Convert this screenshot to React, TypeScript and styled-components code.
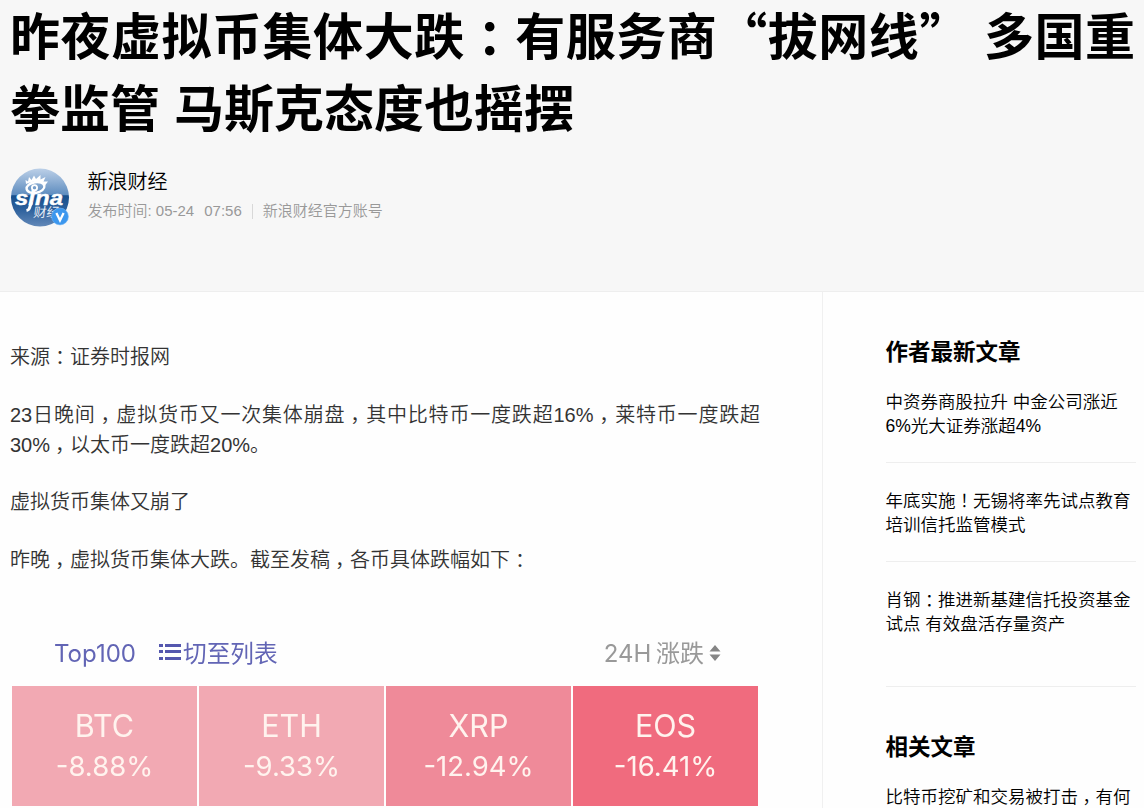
import React from "react"
import styled, { createGlobalStyle } from "styled-components"

const GlobalStyle = createGlobalStyle`
  * {
    box-sizing: border-box;
  }
  body {
    margin: 0;
    background: #fefefe;
    overflow: hidden;
    font-family: "Liberation Sans", "Noto Sans CJK SC", sans-serif;
    font-weight: 350;
  }
  h1, h2, p, ul {
    margin: 0;
    padding: 0;
    font-weight: inherit;
  }
`

// 🧱 Layout
const Page = styled.div`
  width: 1144px;
  height: 808px;
  display: flex;
  flex-direction: column;
  overflow: hidden;
`

const Header = styled.header`
  flex: none;
  height: 292px;
  background: #f7f7f7;
  border-bottom: 1px solid #eee;
  padding: 0 9px 0 10px;
`

const Columns = styled.div`
  flex: 1;
  min-height: 0;
  display: flex;
`

const Article = styled.main`
  width: 822px;
  flex: none;
  padding: 50px 62px 0 10px;
`

const Sidebar = styled.aside`
  flex: 1;
  border-left: 1px solid #f0f0f0;
  padding: 41px 8px 0 62.5px;
`

// 📰 Header
const Title = styled.h1`
  font-family: "Noto Sans CJK SC", sans-serif;
  font-size: 50px;
  font-weight: 700;
  line-height: 72px;
  margin-top: -3px;
  word-spacing: 2.7px;
  text-align: justify;
  color: #000;
`

// Half width glyph centred in a full width cell
const Mark = styled.span`
  font-feature-settings: "halt";
  line-height: 1;
  margin: 0 0.25em;
`

const Author = styled.div`
  display: flex;
  gap: 17.5px;
  margin-top: 26px;
`

const Avatar = styled.svg`
  flex: none;
  width: 60px;
  height: 62px;
`

const AuthorName = styled.p`
  font-size: 20px;
  line-height: 30px;
  color: #000;
`

const Meta = styled.div`
  display: flex;
  align-items: center;
  font-size: 15px;
  line-height: 20px;
  margin-top: 4px;
  color: #999;
  white-space: pre;
`

const Time = styled.span`
  margin-left: 10px;
`

const MetaDivider = styled.i`
  width: 1px;
  height: 15px;
  margin: 0 10px;
  background: #d8d8d8;
`

// 📄 Article
const Paragraph = styled.p`
  font-size: 20px;
  line-height: 30px;
  margin-bottom: 27.5px;
  color: #333;
  text-align: justify;
`

const Market = styled.section`
  font-family: Inter, "Noto Sans CJK SC", sans-serif;
  font-weight: 400;
  margin: 60.5px 0 0 2px;
  width: 746px;
  filter: blur(0.45px);
`

const MarketBar = styled.div`
  display: flex;
  align-items: center;
  height: 36px;
  padding: 0 37px 0 42px;
  margin-bottom: 14.5px;
  font-size: 24px;
  color: #6265b5;
`

const ListSwitch = styled.span`
  display: flex;
  align-items: center;
  gap: 1px;
  margin: -2px 0 0 23px;
  font-size: 23.7px;
`

const SortLabel = styled.span`
  display: flex;
  align-items: center;
  margin: -3px 0 0 auto;
  word-spacing: -2px;
  color: #999;
  svg {
    margin: 2px 0 0 5px;
  }
`

const Tiles = styled.div`
  display: grid;
  grid-template-columns: repeat(4, 1fr);
  gap: 2px;
`

const Tile = styled.div<{ $color: string }>`
  height: 120px;
  display: flex;
  flex-direction: column;
  align-items: center;
  padding-top: 21px;
  background: ${({ $color }) => $color};
  color: #fff3ee;
`

const Coin = styled.span`
  font-size: 30.5px;
  line-height: 38px;
`

const Change = styled.span`
  font-size: 27.5px;
  line-height: 36px;
  margin-top: 3px;
`

// 📚 Sidebar
const SideTitle = styled.h2`
  font-size: 22.5px;
  font-weight: 700;
  line-height: 40px;
  color: #000;
`

const SideList = styled.ul`
  list-style: none;
  margin-top: 17px;
`

const SideItem = styled.li<{ $last?: boolean }>`
  font-size: 17.5px;
  line-height: 24px;
  color: #000;
  white-space: nowrap;
  padding-bottom: ${({ $last }) => ($last ? 50 : 24)}px;
  margin-bottom: ${({ $last }) => ($last ? 41 : 26)}px;
  border-bottom: 1px solid #eee;
`

const coins = [
  { name: "BTC", change: "-8.88%", color: "#f2a9b3" },
  { name: "ETH", change: "-9.33%", color: "#f2a9b3" },
  { name: "XRP", change: "-12.94%", color: "#ef8a99" },
  { name: "EOS", change: "-16.41%", color: "#f06b7e" },
]

function SinaAvatar() {
  return (
    <Avatar viewBox="0 0 60 62">
      <defs>
        <linearGradient id="sky" x1="0" y1="0" x2="0" y2="1">
          <stop offset="0" stopColor="#bcd0e8" />
          <stop offset="0.45" stopColor="#5f8dbf" />
          <stop offset="0.47" stopColor="#174f8c" />
          <stop offset="0.7" stopColor="#2c609c" />
          <stop offset="1" stopColor="#6288b8" />
        </linearGradient>
      </defs>
      <circle cx="30" cy="30.5" r="29" fill="url(#sky)" />
      <ellipse cx="25.5" cy="20.5" rx="9" ry="5.3" fill="none" stroke="#fff" strokeWidth="2.4" transform="rotate(-10 25.5 20.5)" />
      <circle cx="24.5" cy="20.8" r="2.6" fill="none" stroke="#fff" strokeWidth="1.8" />
      <path d="M16 17l-.5-4 2.500 1.500L19 10l2.500 3L24 8.500l2 3.500 4.500-4 0 4.500 5-2.500-2 4.500 4.500 0-3 4c-5-5-12-5-19-1.500z" fill="#fff" />
      <text x="5" y="38" fontFamily="Liberation Sans" fontSize="20" fontWeight="700" fontStyle="italic" fill="#fff" stroke="#fff" strokeWidth="0.4" textLength="48" lengthAdjust="spacingAndGlyphs">
        sina
      </text>
      <path d="M21.500 35l-2 6q-.5 2-3 2.500" fill="none" stroke="#fff" strokeWidth="3" />
      <text x="23" y="50" fontFamily="Noto Sans CJK SC" fontSize="13" fontWeight="400" fill="#e8eef6" transform="skewX(-8) translate(7 0)">
        财经
      </text>
      <circle cx="50" cy="49.5" r="8.4" fill="#3c97ee" stroke="#72b3f1" strokeWidth="0.6" />
      <path d="M46.400 46l3.600 7.400 3.600-7.400" fill="none" stroke="#fff" strokeWidth="2.3" />
    </Avatar>
  )
}

function ListIcon() {
  return (
    <svg width="23" height="20" viewBox="0 0 23 20" fill="#5457ae">
      <path d="M0 2h4v3H0zM6 2h16v3H6zM0 8h4v3H0zM6 8h16v3H6zM0 15h4v3H0zM6 15h16v3H6z" />
    </svg>
  )
}

function SortIcon() {
  return (
    <svg width="12" height="18" viewBox="0 0 12 18" fill="#858585">
      <path d="M0.500 7.500L6 1l5.500 6.500zM0.500 10.500h11L6 17z" />
    </svg>
  )
}

export default function App() {
  return (
    <Page lang="zh-CN">
      <GlobalStyle />
      <Header>
        <Title>
          昨夜虚拟币集体大跌<Mark>：</Mark>有服务商“拔网线” 多国重拳监管 马斯克态度也摇摆
        </Title>
        <Author>
          <SinaAvatar />
          <div>
            <AuthorName>新浪财经</AuthorName>
            <Meta>
              <span>发布时间: 05-24</span>
              <Time>07:56</Time>
              <MetaDivider />
              <span>新浪财经官方账号</span>
            </Meta>
          </div>
        </Author>
      </Header>
      <Columns>
        <Article>
          <Paragraph>
            来源<Mark>：</Mark>证券时报网
          </Paragraph>
          <Paragraph>
            23日晚间<Mark>，</Mark>虚拟货币又一次集体崩盘<Mark>，</Mark>其中比特币一度跌超16%<Mark>，</Mark>莱特币一度跌超30%<Mark>，</Mark>以太币一度跌超20%。
          </Paragraph>
          <Paragraph>虚拟货币集体又崩了</Paragraph>
          <Paragraph>
            昨晚<Mark>，</Mark>虚拟货币集体大跌。截至发稿<Mark>，</Mark>各币具体跌幅如下<Mark>：</Mark>
          </Paragraph>
          <Market>
            <MarketBar>
              <span>Top100</span>
              <ListSwitch>
                <ListIcon />
                切至列表
              </ListSwitch>
              <SortLabel>
                24H 涨跌
                <SortIcon />
              </SortLabel>
            </MarketBar>
            <Tiles>
              {coins.map(({ name, change, color }) => (
                <Tile key={name} $color={color}>
                  <Coin>{name}</Coin>
                  <Change>{change}</Change>
                </Tile>
              ))}
            </Tiles>
          </Market>
        </Article>
        <Sidebar>
          <SideTitle>作者最新文章</SideTitle>
          <SideList>
            <SideItem>
              中资券商股拉升 中金公司涨近
              <br />
              6%光大证券涨超4%
            </SideItem>
            <SideItem>
              年底实施<Mark>！</Mark>无锡将率先试点教育
              <br />
              培训信托监管模式
            </SideItem>
            <SideItem $last>
              肖钢<Mark>：</Mark>推进新基建信托投资基金
              <br />
              试点 有效盘活存量资产
            </SideItem>
          </SideList>
          <SideTitle>相关文章</SideTitle>
          <SideList>
            <SideItem>
              比特币挖矿和交易被打击<Mark>，</Mark>有何
            </SideItem>
          </SideList>
        </Sidebar>
      </Columns>
    </Page>
  )
}
